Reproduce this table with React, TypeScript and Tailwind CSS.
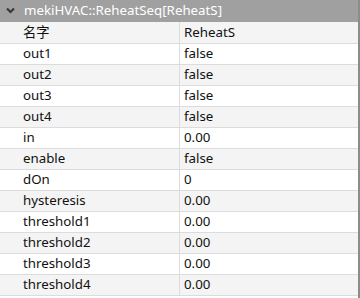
import React from "react";

const rows: [string, string][] = [
  ["out1", "false"],
  ["out2", "false"],
  ["out3", "false"],
  ["out4", "false"],
  ["in", "0.00"],
  ["enable", "false"],
  ["dOn", "0"],
  ["hysteresis", "0.00"],
  ["threshold1", "0.00"],
  ["threshold2", "0.00"],
  ["threshold3", "0.00"],
  ["threshold4", "0.00"],
];

export default function App() {
  return (
    <div
      className="w-[360px] h-[298px] bg-white text-[13.3px] text-[#111] flex"
      style={{ fontFamily: '"Noto Sans", "Noto Sans CJK SC", sans-serif' }}
    >
      <div className="flex-1 flex flex-col">
        <div className="h-[22px] bg-[#a0a0a0] flex items-center">
          <svg width="24" height="22" viewBox="0 0 24 22" className="shrink-0">
            <path d="M7 8.5 L10.5 12 L14 8.5" fill="none" stroke="#383838" strokeWidth="2.2" />
          </svg>
          <span className="text-white leading-none">mekiHVAC::ReheatSeq[ReheatS]</span>
        </div>
        <div className="h-[22px] bg-[#f4f4f4] border-b border-[#dcdcdc] flex">
          <div className="w-[180px] border-r border-[#dcdcdc] pl-[23px] flex items-center">名字</div>
          <div className="flex-1 pl-[4px] flex items-center">ReheatS</div>
        </div>
        {rows.map(([k, v], i) => (
          <div
            key={k}
            className={`h-[21px] border-b border-[#dcdcdc] flex ${i % 2 === 1 ? "bg-[#f4f4f4]" : "bg-white"}`}
          >
            <div className="w-[180px] border-r border-[#dcdcdc] pl-[23px] flex items-center">{k}</div>
            <div className="flex-1 pl-[4px] flex items-center">{v}</div>
          </div>
        ))}
      </div>
      <div className="w-[2px] h-full bg-[#8c8c8c]" />
    </div>
  );
}
